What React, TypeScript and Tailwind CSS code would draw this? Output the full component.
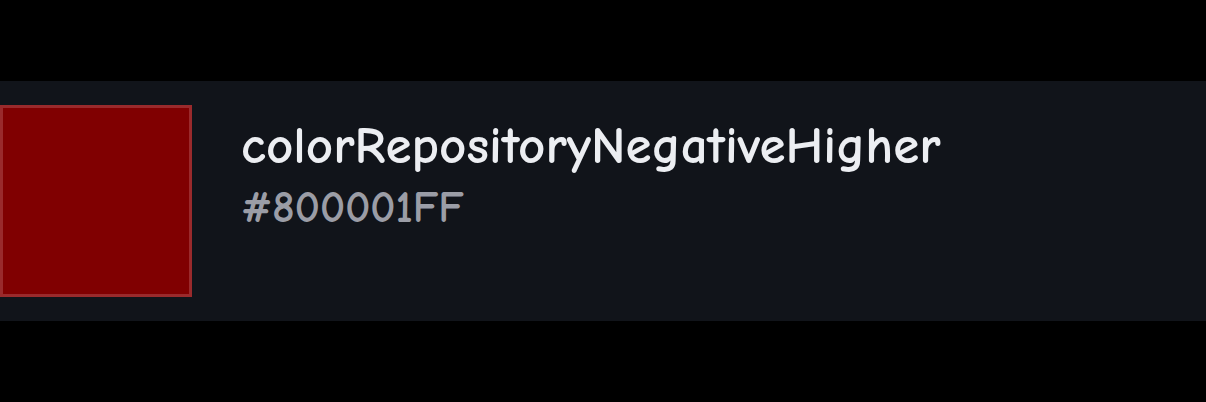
import * as React from "react";

export default function App() {
  const token = { name: "colorRepositoryNegativeHigher", hex: "#800001FF" };
  return (
    <div className="h-[402px] w-full bg-black pt-[81px]" style={{ fontFamily: '"Comic Sans MS", "Comic Neue", Lato, "Noto Sans", sans-serif' }}>
      <div className="flex h-[240px] items-center gap-[49px] bg-[#11141a]">
        <div className="size-[192px] shrink-0 border-[3px] border-[#9a2a2c] bg-[#800001]" />
        <div className="flex flex-col -mt-[54px]">
          <div className="text-[53px] font-bold leading-[60px] text-[#eceef2]">{token.name}</div>
          <div className="mt-[8px] text-[44px] font-bold leading-[48px] text-[#9b9da6]">{token.hex}</div>
        </div>
      </div>
    </div>
  );
}
